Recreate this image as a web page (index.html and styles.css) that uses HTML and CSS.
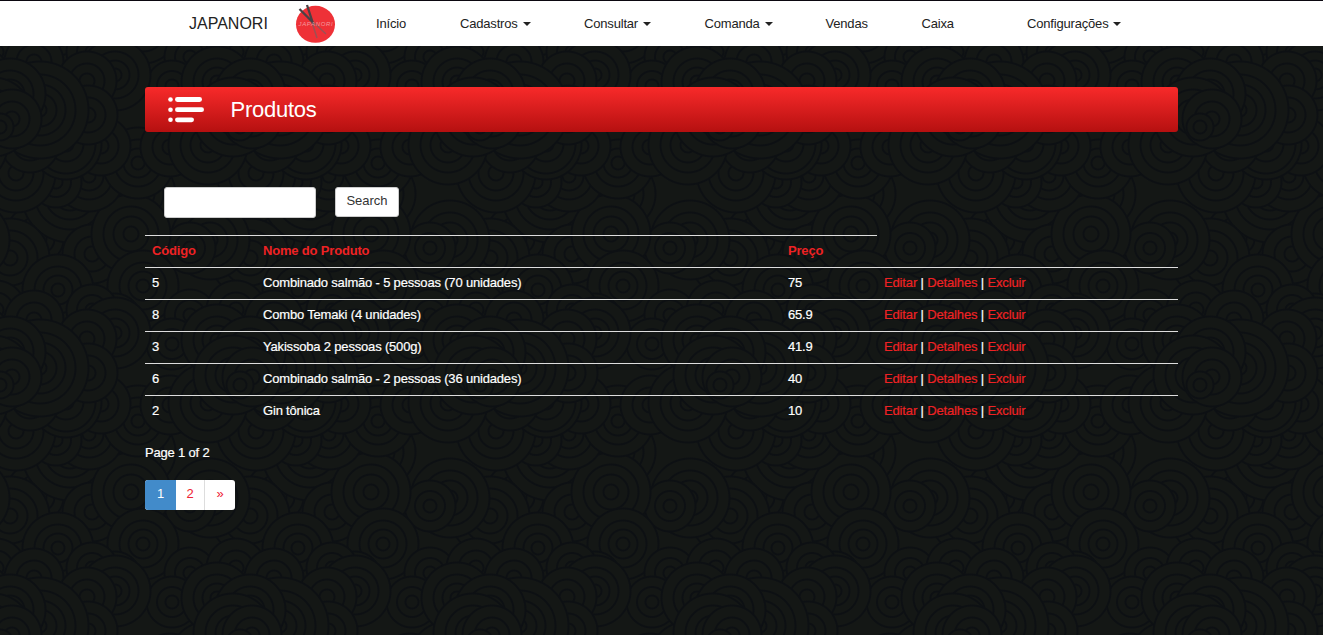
FILE: index.html
```html
<!DOCTYPE html>
<html lang="pt-BR">
<head>
<meta charset="utf-8">
<title>Produtos - Japanori</title>
<link rel="stylesheet" href="styles.css">
</head>
<body>
<header class="navbar">
  <a class="brand">JAPANORI</a>
  <svg class="logo" width="40" height="40" viewBox="0 0 40 40">
    <ellipse cx="20.500" cy="21.300" rx="19.500" ry="18.500" fill="#ee3137"/>
    <g fill="none">
      <path d="M16 17 31 31M16 16 22 35" stroke="#9c5054" stroke-width="1.500"/>
      <path d="M4.500 6 18 19.500M12 2 18.500 22" stroke="#4a4145" stroke-width="2.300"/>
    </g>
    <text x="3.500" y="23" class="logo-text" textLength="34">JAPANORI</text>
  </svg>
  <nav class="menu">
    <a class="inicio">Início</a>
    <a class="cadastros">Cadastros <i class="caret"></i></a>
    <a class="consultar">Consultar <i class="caret"></i></a>
    <a class="comanda">Comanda <i class="caret"></i></a>
    <a class="vendas">Vendas</a>
    <a class="caixa">Caixa</a>
    <a class="config">Configurações <i class="caret"></i></a>
  </nav>
</header>
<main class="container">
  <h1 class="banner">
    <svg width="37" height="27" viewBox="0 0 37 27" fill="#fff">
      <circle cx="2.500" cy="3.500" r="2.300"/><rect x="7" y="1.100" width="27" height="4.800" rx="2.400"/>
      <circle cx="2.500" cy="13.700" r="2.300"/><rect x="7" y="11.300" width="29" height="4.800" rx="2.400"/>
      <circle cx="2.500" cy="23.800" r="2.300"/><rect x="7" y="21.400" width="19" height="4.800" rx="2.400"/>
    </svg>
    <span>Produtos</span>
  </h1>
  <form class="search">
    <input class="field" type="text">
    <button class="btn" type="button">Search</button>
  </form>
  <table class="table">
    <thead><tr><th class="code">Código</th><th class="name">Nome do Produto</th><th class="price">Preço</th></tr></thead>
    <tbody>
      <tr><td>5</td><td>Combinado salmão - 5 pessoas (70 unidades)</td><td>75</td><td class="actions"><a>Editar</a> | <a>Detalhes</a> | <a>Excluir</a></td></tr>
      <tr><td>8</td><td>Combo Temaki (4 unidades)</td><td>65.9</td><td class="actions"><a>Editar</a> | <a>Detalhes</a> | <a>Excluir</a></td></tr>
      <tr><td>3</td><td>Yakissoba 2 pessoas (500g)</td><td>41.9</td><td class="actions"><a>Editar</a> | <a>Detalhes</a> | <a>Excluir</a></td></tr>
      <tr><td>6</td><td>Combinado salmão - 2 pessoas (36 unidades)</td><td>40</td><td class="actions"><a>Editar</a> | <a>Detalhes</a> | <a>Excluir</a></td></tr>
      <tr><td>2</td><td>Gin tônica</td><td>10</td><td class="actions"><a>Editar</a> | <a>Detalhes</a> | <a>Excluir</a></td></tr>
    </tbody>
  </table>
  <p class="page-info">Page 1 of 2</p>
  <div class="pagination"><a class="active">1</a><a>2</a><a>»</a></div>
</main>
</body>
</html>
```
FILE: styles.css
```css
* { box-sizing: border-box; }

:root {
  --f: #141715;
  --l: #0d1013;
  /* concentric discs, one per radius */
  --c14: radial-gradient(circle at center, var(--f) 5px, var(--l) 6px 7px, var(--f) 8px 12px, var(--l) 13px 14px, transparent 15px);
  --c26: radial-gradient(circle at center, var(--f) 5px, var(--l) 6px 7px, var(--f) 8px 13.500px, var(--l) 14.500px 15.500px, var(--f) 16.500px 24px, var(--l) 25px 26px, transparent 27px);
  --c30: radial-gradient(circle at center, var(--f) 6px, var(--l) 7px 8px, var(--f) 9px 16px, var(--l) 17px 18px, var(--f) 19px 28px, var(--l) 29px 30px, transparent 31px);
  --c36: radial-gradient(circle at center, var(--f) 5px, var(--l) 6px 7px, var(--f) 8px 13px, var(--l) 14px 15px, var(--f) 16px 22px, var(--l) 23px 24px, var(--f) 25px 34px, var(--l) 35px 36px, transparent 37px);
  --c40: radial-gradient(circle at center, var(--f) 6px, var(--l) 7px 8px, var(--f) 9px 16px, var(--l) 17px 18px, var(--f) 19px 26px, var(--l) 27px 28px, var(--f) 29px 38px, var(--l) 39px 40px, transparent 41px);
  --c48: radial-gradient(circle at center, var(--f) 5px, var(--l) 6px 7px, var(--f) 8px 15px, var(--l) 16px 17px, var(--f) 18px 24px, var(--l) 25px 26px, var(--f) 27px 34px, var(--l) 35px 36px, var(--f) 37px 47px, var(--l) 48px 49px, transparent 50px);
}

body {
  margin: 0;
  height: 635px;
  overflow: hidden;
  border-top: 1px solid #0b0810;
  font: 13px/20px "Liberation Sans", Arial, sans-serif;
  letter-spacing: -0.18px;
  color: #fff;
  /* wave pattern: each position is (disc centre - half a tile) */
  background-color: var(--f);
  background-origin: border-box;
  background-size: 240px 258px;
  background-image:
    var(--c14), var(--c30), var(--c40), var(--c36), var(--c48), var(--c30), var(--c36), var(--c30), var(--c36),
    var(--c26), var(--c26), var(--c30), var(--c30), var(--c26), var(--c26), var(--c36), var(--c36),
    var(--c40), var(--c30), var(--c30), var(--c30), var(--c36), var(--c30),
    var(--c40), var(--c36), var(--c26), var(--c36),
    var(--c40), var(--c26), var(--c30), var(--c40), var(--c40), var(--c36), var(--c48), var(--c36);
  background-position:
    -120px -2px, -108px -10px, 113px -12px, -110px -35px, -80px -19px, -32px -14px, 97px -47px, -33px -48px, -5px -54px,
    52px -43px, -28px -77px, -86px -67px, 116px -77px, 70px -72px, -5px -68px, -62px -97px, 23px -101px,
    88px 16px, 50px 18px, -90px 14px, -54px 15px, -54px 15px, -19px 17px,
    -104px 44px, 18px 34px, -64px 53px, -31px 47px,
    11px 105px, 70px 119px, -28px 125px, 90px 111px, 130px 129px, 20px 65px, -50px 65px, -80px 110px;
}

.navbar {
  height: 45px;
  display: flex;
  align-items: flex-start;
  background: #fff;
  color: #222;
  padding-left: 189px;
}
.brand { width: 106px; padding-top: 13px; font: 16px/20px "Liberation Sans", Arial, sans-serif; letter-spacing: 0; }
.logo { margin-top: 2px; flex: none; }
.logo-text { font: italic 6px "Liberation Sans", Arial, sans-serif; fill: #f59a9d; }
.menu { display: flex; padding: 13px 0 0 41px; white-space: nowrap; }
.inicio { width: 84px; }
.cadastros { width: 124px; }
.consultar { width: 120.500px; }
.comanda { width: 121px; }
.vendas { width: 96px; }
.caixa { width: 105.500px; }
.caret {
  display: inline-block;
  margin: 0 0 2px 1.500px;
  vertical-align: middle;
  border: 4px solid transparent;
  border-top-color: #222;
  border-bottom: 0;
}

.container { width: 1033px; margin: 41px auto 0; }
.banner {
  display: flex;
  align-items: center;
  height: 45px;
  margin: 0;
  padding-left: 23px;
  gap: 25.500px;
  border-radius: 3px;
  background: linear-gradient(#f82a2a, #b51010);
  font: 22px/45px "Liberation Sans", Arial, sans-serif;
  letter-spacing: -0.25px;
}
.search { display: flex; gap: 19px; margin: 55px 0 17px 19px; }
.field { width: 152px; height: 31px; border: 1px solid #ccc; border-radius: 3px; background: #fff; }
.btn {
  width: 64px;
  height: 30px;
  padding: 0 0 3px;
  border: 1px solid #ccc;
  border-radius: 3px;
  background: #fff;
  color: #333;
  font: inherit;
}

.table { width: 100%; table-layout: fixed; border-collapse: separate; border-spacing: 0; }
.table th, .table td { height: 32px; padding: 5px 7px 6px; border-top: 1px solid #ddd; text-align: left; }
.table td, .page-info { -webkit-text-stroke: 0.200px; }
.table .actions { letter-spacing: -0.150px; }
.table th { color: #ee2224; font-weight: bold; }
.code { width: 111px; }
.name { width: 525px; }
.price { width: 96px; }
.actions a { color: #ee2224; }
.page-info { margin: 16px 0 17px; }
.pagination { display: flex; width: 90px; height: 30px; border-radius: 3px; overflow: hidden; background: #fff; }
.pagination a { width: 28px; padding-top: 4px; text-align: center; color: #ee2233; }
.pagination a + a + a { width: 31px; border-left: 1px solid #ddd; }
.pagination .active { width: 31px; background: #428bca; color: #fff; }
```
